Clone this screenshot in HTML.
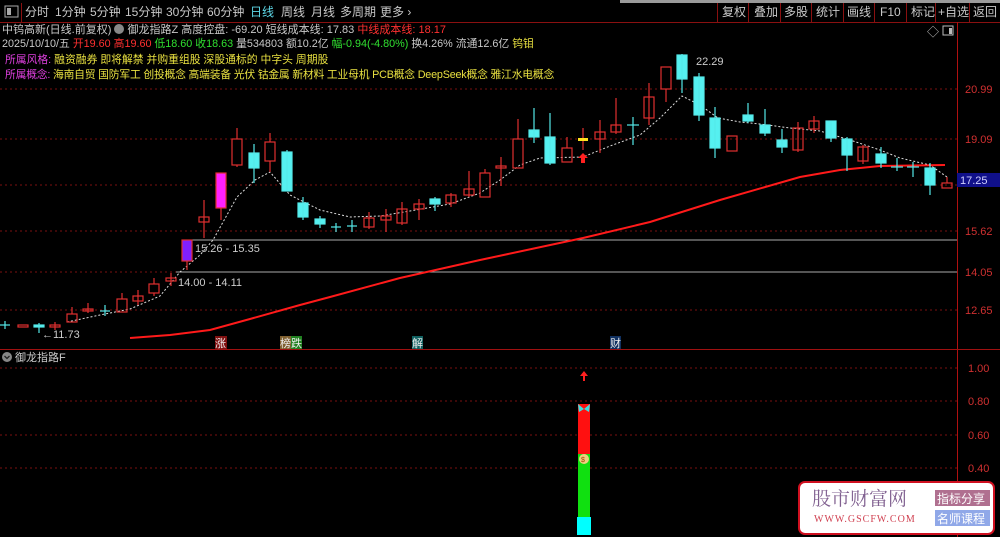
<!DOCTYPE html>
<html><head><meta charset="utf-8"><style>
body{margin:0;width:1000px;height:537px;background:#000;overflow:hidden;font-family:"Liberation Sans","Noto Sans CJK SC",sans-serif;position:relative}
.t{position:absolute;white-space:nowrap;font-size:11px;line-height:13px}
</style></head><body>
<svg width="1000" height="537" style="position:absolute;left:0;top:0" font-family="Liberation Sans, Noto Sans CJK SC, sans-serif">
<rect x="0" y="0" width="1000" height="22" fill="#000"/>
<rect x="620" y="0" width="380" height="3" fill="#9a9a9a"/>
<line x1="0" y1="22.5" x2="1000" y2="22.5" stroke="#8a1010"/>
<rect x="5" y="6" width="13" height="11" fill="none" stroke="#aaa"/><rect x="7" y="8" width="4" height="7" fill="#aaa"/>
<line x1="21.5" y1="3" x2="21.5" y2="22" stroke="#8a1010"/>
<g font-size="12" fill="#c8c8c8">
<text x="25" y="16">分时</text><text x="55" y="16">1分钟</text><text x="90" y="16">5分钟</text><text x="125" y="16">15分钟</text><text x="166" y="16">30分钟</text><text x="207" y="16">60分钟</text><text x="250" y="16" fill="#5ed8e8">日线</text><text x="281" y="16">周线</text><text x="311" y="16">月线</text><text x="340" y="16">多周期</text><text x="380" y="16">更多 ›</text>
<text x="722" y="16">复权</text><text x="754" y="16">叠加</text><text x="784" y="16">多股</text><text x="816" y="16">统计</text><text x="847" y="16">画线</text><text x="880" y="16">F10</text><text x="911" y="16">标记</text><text x="938" y="16">+自选</text><text x="973" y="16">返回</text>
</g>
<g stroke="#8a1010"><line x1="717.5" y1="3" x2="717.5" y2="22"/><line x1="748.5" y1="3" x2="748.5" y2="22"/><line x1="780.5" y1="3" x2="780.5" y2="22"/><line x1="811.5" y1="3" x2="811.5" y2="22"/><line x1="843.5" y1="3" x2="843.5" y2="22"/><line x1="874.5" y1="3" x2="874.5" y2="22"/><line x1="906.5" y1="3" x2="906.5" y2="22"/><line x1="935.5" y1="3" x2="935.5" y2="22"/><line x1="969.5" y1="3" x2="969.5" y2="22"/></g>
<line x1="957.5" y1="22" x2="957.5" y2="537" stroke="#b01010"/>
<line x1="0" y1="349.5" x2="1000" y2="349.5" stroke="#a01010"/>
<g stroke="#7a1010" stroke-dasharray="2,3">
<line x1="0" y1="89" x2="957" y2="89"/><line x1="0" y1="139" x2="957" y2="139"/><line x1="0" y1="185" x2="957" y2="185"/><line x1="0" y1="231" x2="957" y2="231"/><line x1="0" y1="272" x2="957" y2="272"/><line x1="0" y1="310" x2="957" y2="310"/>
<line x1="0" y1="368" x2="957" y2="368"/><line x1="0" y1="401" x2="957" y2="401"/><line x1="0" y1="435" x2="957" y2="435"/><line x1="0" y1="468" x2="957" y2="468"/>
</g>
<g font-size="11" fill="#d03030">
<text x="965" y="93">20.99</text><text x="965" y="143">19.09</text><text x="965" y="235">15.62</text><text x="965" y="276">14.05</text><text x="965" y="314">12.65</text>
<text x="968" y="372">1.00</text><text x="968" y="405">0.80</text><text x="968" y="439">0.60</text><text x="968" y="472">0.40</text>
</g>
<rect x="957" y="173" width="43" height="14" fill="#10108a"/>
<text x="960" y="184" font-size="11" fill="#d0d0ff">17.25</text>
<text x="927" y="36" font-size="12" fill="#bbb">◇</text>
<rect x="943" y="26" width="10" height="9" fill="none" stroke="#bbb"/><rect x="949" y="28" width="3" height="6" fill="#bbb"/>
<line x1="190" y1="240" x2="957" y2="240" stroke="#aaa"/>
<line x1="176" y1="272" x2="957" y2="272" stroke="#aaa"/>
<g font-size="11" fill="#ccc"><text x="195" y="252">15.26 - 15.35</text><text x="178" y="286">14.00 - 14.11</text><text x="42" y="338">←11.73</text><text x="696" y="65">22.29</text></g>
<polyline fill="none" stroke="#ff1a1a" stroke-width="2" points="130,338 170,335 210,330 250,319 300,305 330,297 400,278 480,260 583,238 650,222 720,200 800,177 840,170 880,166 945,165"/>
<polyline fill="none" stroke="#ddd" stroke-dasharray="2,2" points="67,322 100,315 130,309 160,296 180,272 200,255 213,240 237,197 255,180 270,172 290,195 320,210 350,217 380,216 410,211 450,204 480,193 500,180 520,165 540,158 583,157 610,146 640,135 660,118 682,96 700,105 718,118 740,122 760,124 790,128 820,131 850,140 880,150 900,158 930,165 947,177"/>
<g stroke-width="1.2">
<g stroke="#55e8e8" fill="#55f0f0">
<line x1="5" y1="321" x2="5" y2="329"/><line x1="0" y1="325" x2="10" y2="325"/>
<rect x="34" y="325" width="10" height="2"/><line x1="39" y1="323" x2="39" y2="333"/>
<line x1="105" y1="305" x2="105" y2="316"/><line x1="100" y1="311" x2="110" y2="311"/>
<rect x="249" y="153" width="10" height="15"/><line x1="254" y1="144" x2="254" y2="183"/>
<rect x="282" y="152" width="10" height="39"/><line x1="287" y1="150" x2="287" y2="191"/>
<rect x="298" y="203" width="10" height="14"/><line x1="303" y1="197" x2="303" y2="220"/>
<rect x="315" y="219" width="10" height="5"/><line x1="320" y1="216" x2="320" y2="228"/>
<line x1="336" y1="223" x2="336" y2="232"/><line x1="331" y1="227" x2="341" y2="227"/>
<line x1="352" y1="220" x2="352" y2="232"/><line x1="347" y1="226" x2="357" y2="226"/>
<rect x="430" y="199" width="10" height="5"/><line x1="435" y1="197" x2="435" y2="211"/>
<rect x="529" y="130" width="10" height="7"/><line x1="534" y1="108" x2="534" y2="143"/>
<rect x="545" y="137" width="10" height="26"/><line x1="550" y1="113" x2="550" y2="165"/>
<line x1="633" y1="117" x2="633" y2="145"/><line x1="627" y1="125" x2="639" y2="125"/>
<rect x="677" y="55" width="10" height="24"/><line x1="682" y1="54" x2="682" y2="93"/>
<rect x="694" y="77" width="10" height="38"/><line x1="699" y1="73" x2="699" y2="121"/>
<rect x="710" y="118" width="10" height="30"/><line x1="715" y1="107" x2="715" y2="158"/>
<rect x="743" y="115" width="10" height="6"/><line x1="748" y1="103" x2="748" y2="123"/>
<rect x="760" y="125" width="10" height="8"/><line x1="765" y1="109" x2="765" y2="136"/>
<rect x="777" y="140" width="10" height="7"/><line x1="782" y1="129" x2="782" y2="153"/>
<rect x="826" y="121" width="10" height="17"/><line x1="831" y1="121" x2="831" y2="142"/>
<rect x="842" y="139" width="10" height="16"/><line x1="847" y1="137" x2="847" y2="171"/>
<rect x="876" y="154" width="10" height="9"/><line x1="881" y1="147" x2="881" y2="168"/>
<line x1="897" y1="158" x2="897" y2="171"/><line x1="891" y1="167" x2="903" y2="167"/>
<line x1="913" y1="162" x2="913" y2="177"/><line x1="907" y1="167" x2="919" y2="167"/>
<rect x="925" y="168" width="10" height="17"/><line x1="930" y1="163" x2="930" y2="195"/>
</g>
<g stroke="#e03030" fill="none">
<rect x="18" y="325" width="10" height="2"/>
<rect x="50" y="325" width="10" height="2"/><line x1="55" y1="322" x2="55" y2="330"/>
<rect x="67" y="314" width="10" height="8"/><line x1="72" y1="307" x2="72" y2="314"/>
<rect x="83" y="309" width="10" height="2"/><line x1="88" y1="303" x2="88" y2="313"/>
<rect x="117" y="299" width="10" height="13"/><line x1="122" y1="293" x2="122" y2="299"/>
<rect x="133" y="296" width="10" height="5"/><line x1="138" y1="290" x2="138" y2="305"/>
<rect x="149" y="284" width="10" height="9"/><line x1="154" y1="278" x2="154" y2="284"/><line x1="154" y1="293" x2="154" y2="296"/>
<rect x="166" y="278" width="10" height="3"/><line x1="171" y1="273" x2="171" y2="286"/>
<line x1="187" y1="261" x2="187" y2="270"/>
<rect x="199" y="217" width="10" height="5"/><line x1="204" y1="200" x2="204" y2="238"/>
<line x1="221" y1="208" x2="221" y2="220"/>
<rect x="232" y="139" width="10" height="26"/><line x1="237" y1="128" x2="237" y2="139"/><line x1="237" y1="165" x2="237" y2="167"/>
<rect x="265" y="142" width="10" height="19"/><line x1="270" y1="133" x2="270" y2="142"/><line x1="270" y1="161" x2="270" y2="172"/>
<rect x="364" y="218" width="10" height="9"/><line x1="369" y1="212" x2="369" y2="229"/>
<rect x="381" y="216" width="10" height="4"/><line x1="386" y1="209" x2="386" y2="232"/>
<rect x="397" y="209" width="10" height="14"/><line x1="402" y1="202" x2="402" y2="225"/>
<rect x="414" y="204" width="10" height="5"/><line x1="419" y1="199" x2="419" y2="220"/>
<rect x="446" y="195" width="10" height="8"/><line x1="451" y1="193" x2="451" y2="207"/>
<rect x="464" y="189" width="10" height="6"/><line x1="469" y1="171" x2="469" y2="197"/>
<rect x="480" y="173" width="10" height="24"/><line x1="485" y1="169" x2="485" y2="173"/>
<rect x="496" y="166" width="10" height="2"/><line x1="501" y1="157" x2="501" y2="186"/>
<rect x="513" y="139" width="10" height="29"/><line x1="518" y1="119" x2="518" y2="139"/>
<rect x="562" y="148" width="10" height="14"/><line x1="567" y1="137" x2="567" y2="148"/>
<line x1="583" y1="128" x2="583" y2="150"/>
<rect x="595" y="132" width="10" height="7"/><line x1="600" y1="120" x2="600" y2="153"/>
<rect x="611" y="125" width="10" height="7"/><line x1="616" y1="98" x2="616" y2="134"/>
<rect x="644" y="97" width="10" height="21"/><line x1="649" y1="83" x2="649" y2="125"/>
<rect x="661" y="67" width="10" height="22"/><line x1="666" y1="89" x2="666" y2="102"/>
<rect x="727" y="136" width="10" height="15"/>
<rect x="793" y="128" width="10" height="22"/><line x1="798" y1="122" x2="798" y2="152"/>
<rect x="809" y="121" width="10" height="8"/><line x1="814" y1="116" x2="814" y2="133"/>
<rect x="858" y="147" width="10" height="14"/><line x1="863" y1="145" x2="863" y2="164"/>
<rect x="942" y="183" width="10" height="5"/><line x1="947" y1="177" x2="947" y2="183"/>
</g>
<rect x="182" y="240" width="10" height="21" fill="#8020ff" stroke="#e03030"/>
<rect x="216" y="173" width="10" height="35" fill="#ff20ff" stroke="#e03030"/>
<rect x="578" y="138" width="10" height="3" fill="#ffe020"/>
<path d="M583 153 L578 158 L581 158 L581 163 L585 163 L585 158 L588 158 Z" fill="#ff2020"/>
</g>
<rect x="215" y="336" width="12" height="13" fill="#801010"/><text x="215" y="347" font-size="11" fill="#eee">涨</text>
<rect x="280" y="336" width="11" height="13" fill="#806030"/><rect x="291" y="336" width="11" height="13" fill="#208020"/><text x="280" y="347" font-size="11" fill="#eee">榜跌</text>
<rect x="412" y="336" width="11" height="13" fill="#106060"/><text x="412" y="347" font-size="11" fill="#eee">解</text>
<rect x="610" y="336" width="11" height="13" fill="#103060"/><text x="610" y="347" font-size="11" fill="#eee">财</text>
<circle cx="7" cy="357" r="5" fill="#888"/><path d="M4.5 356 L7 358.5 L9.5 356" stroke="#222" fill="none" stroke-width="1.3"/>
<text x="15" y="361" font-size="11" fill="#ccc">御龙指路F</text>
<path d="M584 371 L580 376 L583 376 L583 381 L585 381 L585 376 L588 376 Z" fill="#ff2020"/>
<rect x="578" y="404" width="12" height="50" fill="#ff1010"/>
<rect x="578" y="454" width="12" height="63" fill="#10e010"/>
<rect x="577" y="517" width="14" height="18" fill="#00ffff"/>
<path d="M578 404 L584 409 L590 404 L589 412 L584 409 L579 412 Z" fill="#40e0e0"/>
<circle cx="584" cy="459" r="5" fill="#f0d080"/><text x="581" y="462" font-size="7" fill="#a04000">$</text>
<rect x="799" y="482" width="195" height="52" rx="6" fill="#fff" stroke="#d01020" stroke-width="2"/>
<text x="812" y="505" font-size="19" fill="#806090" font-family="Liberation Serif, Noto Serif CJK SC, serif">股市财富网</text>
<text x="814" y="522" font-size="10" fill="#d04050" font-family="Liberation Serif, serif" letter-spacing="1">WWW.GSCFW.COM</text>
<rect x="935" y="490" width="55" height="16" fill="#b07090"/><text x="937" y="503" font-size="12" fill="#fff">指标分享</text>
<rect x="935" y="510" width="55" height="16" fill="#90a8e8"/><text x="937" y="523" font-size="12" fill="#fff">名师课程</text>
</svg>
<div class="t" style="left:2px;top:24px;color:#c8c8c8">中钨高新(日线.前复权) <span style="display:inline-block;width:10px;height:10px;border-radius:5px;background:#888;vertical-align:-1px"></span> 御龙指路Z 高度控盘: -69.20 短线成本线: 17.83 <span style="color:#ff3030">中线成本线: 18.17</span></div>
<div class="t" style="left:2px;top:38px;color:#c8c8c8;font-size:10.8px">2025/10/10/五 <span style="color:#ff3030">开19.60 高19.60</span> <span style="color:#30e030">低18.60 收18.63</span> <span style="color:#c8c8c8">量534803 额10.2亿</span> <span style="color:#30e030">幅-0.94(-4.80%)</span> 换4.26% 流通12.6亿 <span style="color:#e8e040">钨钼</span></div>
<div class="t" style="left:5px;top:54px;color:#e8e040;font-size:10.8px"><span style="color:#e040e0">所属风格:</span> 融资融券 即将解禁 并购重组股 深股通标的 中字头 周期股</div>
<div class="t" style="left:5px;top:69px;color:#e8e040;font-size:10.8px;letter-spacing:-0.2px"><span style="color:#e040e0">所属概念:</span> 海南自贸 国防军工 创投概念 高端装备 光伏 钴金属 新材料 工业母机 PCB概念 DeepSeek概念 雅江水电概念</div>
</body></html>
